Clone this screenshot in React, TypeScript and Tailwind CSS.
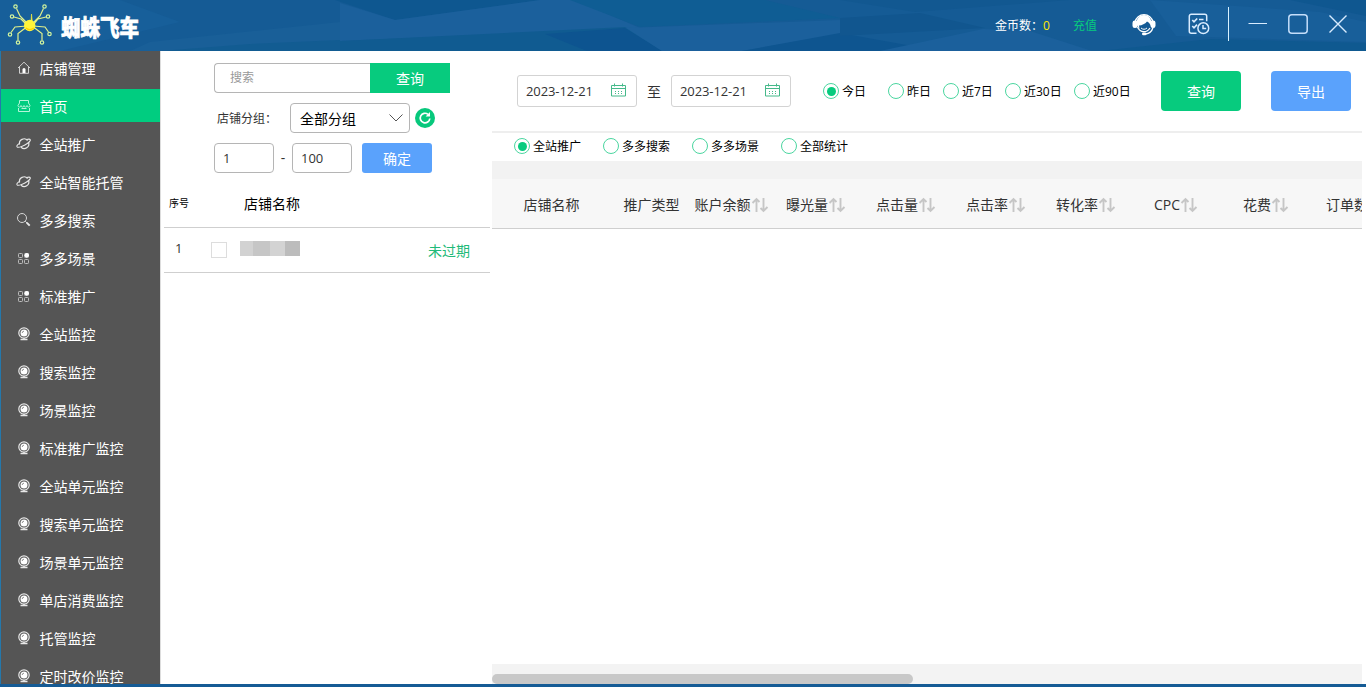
import { useState } from "react";
import clsx from "clsx";

const menu = [
  { label: "店铺管理", icon: "home" },
  { label: "首页", icon: "shop" },
  { label: "全站推广", icon: "planet" },
  { label: "全站智能托管", icon: "planet" },
  { label: "多多搜索", icon: "search" },
  { label: "多多场景", icon: "grid" },
  { label: "标准推广", icon: "grid" },
  { label: "全站监控", icon: "camera" },
  { label: "搜索监控", icon: "camera" },
  { label: "场景监控", icon: "camera" },
  { label: "标准推广监控", icon: "camera" },
  { label: "全站单元监控", icon: "camera" },
  { label: "搜索单元监控", icon: "camera" },
  { label: "场景单元监控", icon: "camera" },
  { label: "单店消费监控", icon: "camera" },
  { label: "托管监控", icon: "camera" },
  { label: "定时改价监控", icon: "camera" },
];

const days = [
  { label: "今日", width: "w-[65px]" },
  { label: "昨日", width: "w-[55px]" },
  { label: "近7日", width: "w-[62px]" },
  { label: "近30日", width: "w-[69px]" },
  { label: "近90日", width: "w-[79px]" },
];

const types = ["全站推广", "多多搜索", "多多场景", "全部统计"];

const columns = [
  { label: "店铺名称", width: "w-[119px]" },
  { label: "推广类型", width: "w-[81px]" },
  { label: "账户余额", width: "w-[79px]", sort: true },
  { label: "曝光量", width: "w-[90px]", sort: true },
  { label: "点击量", width: "w-[90px]", sort: true },
  { label: "点击率", width: "w-[90px]", sort: true },
  { label: "转化率", width: "w-[90px]", sort: true },
  { label: "CPC", width: "w-[90px]", sort: true },
  { label: "花费", width: "w-[90px]", sort: true },
  { label: "订单数", width: "w-[90px]", sort: true },
];

function MenuIcon({ name }: { name: string }) {
  return (
    <svg viewBox="0 0 14 14" className="w-3.5 h-3.5 shrink-0 overflow-visible" fill="none" stroke="#e8e8e8" strokeWidth="1">
      {name === "home" && (
        <>
          <path d="M1 7 7 1.2 13 7M2.5 6v6.3h9V6" stroke="#cfcfcf" />
          <path d="M5.5 12V8.6a1.5 1.5 0 0 1 3 0V12z" fill="#fff" stroke="none" />
        </>
      )}
      {name === "shop" && (
        <path
          d="M2.5 4V1.500h9V4M2.500 4 1 6.500a1.500 1.500 0 0 0 3 0 1.500 1.500 0 0 0 3 0 1.500 1.500 0 0 0 3 0 1.500 1.500 0 0 0 3 0L11.500 4M1.500 9v3.500h11V9M4.500 9.500h5"
          stroke="#b5f5da"
        />
      )}
      {name === "planet" && (
        <>
          <path d="M2.600 7.500a4.600 4.600 0 0 1 8-4M11.600 5.500a4.600 4.600 0 0 1-7.500 4.800" strokeWidth="1.200" />
          <path d="M2.800 6.300C.8 7.500-.5 8.800 0 9.700c.7 1.100 4.300.2 7.900-1.700s6-4.300 5.400-5.300c-.4-.7-1.700-.7-3.500-.2" strokeWidth="1.100" />
        </>
      )}
      {name === "search" && (
        <>
          <circle cx="5" cy="5" r="4.500" stroke="#d6d6d6" />
          <path d="m8.300 8.300 1.600 1.600" />
          <path d="m9.700 9.700 3 3" strokeWidth="1.900" />
        </>
      )}
      {name === "grid" && (
        <>
          <g stroke="#bdbdbd">
            <rect x="1.500" y="2.500" width="4" height="4" rx=".8" />
            <rect x="1.500" y="8.500" width="4" height="4" rx=".8" />
            <rect x="7.500" y="8.500" width="4" height="4" rx=".8" />
            <rect x="7.500" y="2.500" width="4" height="4" rx=".8" />
          </g>
          <circle cx="9.800" cy="4.200" r="2.200" fill="#fff" stroke="none" />
        </>
      )}
      {name === "camera" && (
        <>
          <circle cx="7" cy="6" r="5.200" strokeWidth="1.200" />
          <circle cx="7" cy="6" r="3.500" fill="#fff" stroke="none" />
          <path d="M5.200 6A1.800 1.800 0 0 1 7 4.200" stroke="#777" strokeWidth=".8" />
          <path d="M3.500 12.500h7M7 11v1.500" strokeWidth="1.300" />
        </>
      )}
    </svg>
  );
}

function HeaderPattern() {
  return (
    <svg className="absolute inset-0 w-full h-full" viewBox="0 0 1366 51" preserveAspectRatio="none">
      <rect width="1366" height="51" fill="#155b95" />
      <path d="M0 0h120l60 22L60 51H0z" fill="#175f9a" />
      <path d="M150 42 340 22v29H130z" fill="#195f98" />
      <path d="M160 51 250 44l90-4v11z" fill="#125c92" />
      <path d="M335 0h205L395 20z" fill="#0e5790" />
      <path d="m340 3 55 17L540 0h35l65 28-300 13z" fill="#1b609c" />
      <path d="m340 41 285-14 37 24H340z" fill="#105b91" />
      <path d="m545 34 80-6 37 23h-75z" fill="#0d5490" />
      <path d="M570 0h195l75 18-200 9z" fill="#0f5d94" />
      <path d="m626 28 214-8v14l-98 17h-80z" fill="#1b609c" />
      <path d="m742 51 98-18 100 18z" fill="#0e5590" />
      <path d="M840 0h230L915 12z" fill="#125891" />
      <path d="m840 18 80-5 65 15-145 8z" fill="#11568f" />
      <path d="m880 51 103-22 47 2 62 20z" fill="#1b609c" />
      <path d="m1100 51 110-12 156 4v8z" fill="#0f5990" />
      <path d="m1150 0 170 12 46 10v20l-190-6z" fill="#185f9a" />
      <path d="M1290 0h76v16z" fill="#0f5790" />
    </svg>
  );
}

function Spider() {
  const feet = [[15.5, 4.5], [44.5, 4.5], [12, 14.5], [48, 14.5], [10, 32.5], [49.5, 32], [18, 40.5], [42, 40.5]];
  return (
    <svg viewBox="0 0 54 48" className="w-[54px] h-12 shrink-0" fill="none" stroke="#e0f08c" strokeWidth="1.200">
      <path d="M16.500 6.500 20 14l7 7M43.500 6.500 40 14l-7 7M14 15l7 2 5 5M46 15l-8 2-4 5M11 30.500l4-5.500 12-1M48.500 30 45 25l-12-1M18 38.500v-7l8-6M42 38.500v-7l-8-6" />
      {feet.map(([x, y]) => (
        <circle key={`${x}-${y}`} cx={x} cy={y} r="1.700" fill="#155b95" stroke="#d2f5a0" />
      ))}
      <path d="m31 20 .5-8 .8 8z" fill="#fff43a" stroke="#fff43a" strokeWidth=".6" />
      <circle cx="29.700" cy="23.500" r="5.700" fill="#fff43a" stroke="none" />
      <path d="M26 26c2 2 5 2 8 0" stroke="#ffd000" />
    </svg>
  );
}

function Radio({ label, checked, onChange }: { label: string; checked: boolean; onChange: () => void }) {
  return (
    <button onClick={onChange} className="flex items-center gap-[3px] text-xs leading-4 text-black whitespace-nowrap">
      <span className="w-4 h-4 rounded-full border border-[#4bd6a0] bg-white flex items-center justify-center shrink-0">
        {checked && <span className="w-[9px] h-[9px] rounded-full bg-[#07cb7e]" />}
      </span>
      <span className="mt-0.5">{label}</span>
    </button>
  );
}

function DateBox({ value }: { value: string }) {
  return (
    <div className="w-[120px] h-8 border border-[#d3d3d3] rounded-[3px] flex items-center justify-between pl-2 pr-2.5 text-[13px] text-[#333]">
      <span className="tracking-[-0.1px]">{value}</span>
      <svg viewBox="0 0 15 14" className="w-[15px] h-3.5 -mt-0.5" fill="none" stroke="#45b98a">
        <path d="M.5 2.500h14v10.500H.5zM.5 5.500h14M3.500.5v3M11.500.5v3" />
        <path d="M4 8.500h7M4 10.500h7" strokeDasharray="1 2" />
      </svg>
    </div>
  );
}

function SortArrows() {
  return (
    <svg viewBox="0 0 18 16" className="w-[18px] h-4 shrink-0" fill="none" stroke="#c6c6c6" strokeWidth="1.900">
      <path d="M5.500 15V2M1.500 6 5.500 2l3 3M12.500 1v13M9.500 11l3 3 4-4" />
    </svg>
  );
}

export default function App() {
  const [active, setActive] = useState("首页");
  const [day, setDay] = useState("今日");
  const [type, setType] = useState("全站推广");

  return (
    <div className="w-[1366px] h-[687px] overflow-hidden flex flex-col bg-white font-['Open_Sans','Noto_Sans_CJK_SC',sans-serif] text-sm text-[#333]">
      <header className="relative h-[51px] shrink-0 text-white">
        <HeaderPattern />
        <div className="relative h-full flex items-center">
          <Spider />
          <h1 className="ml-[7px] mt-1 text-[19.5px] leading-6 font-black scale-y-115 whitespace-nowrap [-webkit-text-stroke:0.6px_white]">蜘蛛飞车</h1>
          <div className="ml-auto flex items-center h-full text-xs">
            <span>金币数：</span>
            <span className="w-[30px] text-[#ffe800]">0</span>
            <a className="w-[59px] text-[#07cb7e]">充值</a>
            <svg viewBox="0 0 24 24" className="w-6 h-6 -mt-1" fill="none" stroke="#fff">
              <path d="M3 10a9.200 9.200 0 0 1 18 0" strokeWidth="1.300" />
              <path d="M4.500 11C4.500 6 8 3 12 3s7.500 3 7.500 8l-1 2.500c-.5-2-1.500-3-3.500-4-2 2.500-5 3.800-8 4l.5 3.500A9 9 0 0 1 4.500 11z" fill="#fff" stroke="none" />
              <rect x=".5" y="8.500" width="5" height="7.500" rx="2.300" fill="#fff" stroke="none" />
              <rect x="18.500" y="8.500" width="5" height="7.500" rx="2.300" fill="#fff" stroke="none" />
              <path d="M5.500 15c1.300 3.200 3.500 4.700 6.500 4.700 2.500 0 4.500-1.200 6-3.700M21 15.500c-1 3.500-3.500 6-7.500 6.500" strokeWidth="1.300" />
              <path d="M9 16c2 1.700 4 1.700 6 0" strokeWidth="1" />
              <rect x="10" y="20.500" width="4.500" height="2.800" rx="1.400" fill="#fff" stroke="none" />
            </svg>
            <svg viewBox="0 0 22 22" className="ml-8 w-[22px] h-[22px] -mt-1" fill="none" stroke="#d9ecff" strokeWidth="1.500">
              <path d="M8.500 20.200H3.300a2 2 0 0 1-2-2v-15a2 2 0 0 1 2-2h13.400a2 2 0 0 1 2 2v5" />
              <path d="m4.300 7 1.700 1.800 3.200-3.300M11 6.500h4.500M4.300 13 6 14.800l3-3.100" strokeWidth="1.700" />
              <circle cx="15.300" cy="15.200" r="5.400" />
              <path d="M15 12v3.500h3.200" />
            </svg>
            <span className="ml-[18px] -mt-1 w-px h-[34px] bg-[#d7f1ff]" />
            <svg viewBox="0 0 20 20" className="ml-[19px] -mt-1 w-5 h-5" stroke="#d9ecff">
              <path d="M.5 9.500h18.500" />
            </svg>
            <svg viewBox="0 0 20 20" className="ml-5 -mt-1 w-5 h-5" fill="none" stroke="#c5defa" strokeWidth="1.500">
              <rect x=".8" y=".8" width="18.400" height="18.400" rx="3" />
            </svg>
            <svg viewBox="0 0 20 20" className="ml-5 mr-[18px] -mt-1 w-5 h-5" stroke="#d9ecff" strokeWidth="1.400">
              <path d="m1.500 1.500 17 17M18.500 1.500l-17 17" />
            </svg>
          </div>
        </div>
      </header>

      <div className="flex h-[633px] shrink-0 overflow-hidden">
        <nav className="w-[161px] shrink-0 bg-[#555] border-l border-[#2478ac] border-r border-r-[#ddd] text-white">
          {menu.map((item, i) => (
            <div key={item.label} className={clsx(i === 0 ? "h-[37px]" : "h-[38px] pt-px")}>
              <button
                onClick={() => setActive(item.label)}
                className={clsx("w-full h-[33px] pl-[15.5px] flex items-center gap-[9px] text-left", active === item.label && "bg-[#00cd80]")}
              >
                <MenuIcon name={item.icon} />
                <span className="mt-0.5 leading-5">{item.label}</span>
              </button>
            </div>
          ))}
        </nav>

        <section className="w-[331px] shrink-0 pt-3 pl-[3px] pr-0.5">
          <div className="flex flex-col gap-2.5 pl-[50px]">
            <div className="flex h-[30px]">
              <input placeholder="搜索" className="w-[156px] border border-r-0 border-[#b5b5b5] rounded-l px-[15px] text-xs placeholder:text-[#999] outline-none" />
              <button className="w-20 pt-0.5 bg-[#07cb7e] text-white">查询</button>
            </div>
            <div className="flex items-center h-[30px]">
              <span className="w-[76px] pl-[3px] pt-0.5 text-xs">店铺分组：</span>
              <div className="w-[120px] h-full border border-[#b5b5b5] rounded flex items-center justify-between pl-[9px] pr-1.5 text-black">
                <span className="mt-0.5">全部分组</span>
                <svg viewBox="0 0 14 8" className="w-3.5 h-2" fill="none" stroke="#555">
                  <path d="m.5.500 6.500 6.500L13.500.5" />
                </svg>
              </div>
              <svg viewBox="0 0 20 20" className="ml-[5px] w-5 h-5" fill="none">
                <circle cx="10" cy="10" r="10" fill="#07c87c" />
                <path d="M14.800 10.500a4.800 4.800 0 1 1-1.800-4.200" stroke="#fff" strokeWidth="1.700" />
                <path d="M15 4v4.400h-4.400z" fill="#fff" />
              </svg>
            </div>
            <div className="flex items-center h-[30px]">
              <input defaultValue="1" className="w-[60px] h-full border border-[#b5b5b5] rounded px-2 text-[13px] outline-none" />
              <span className="w-[18px] text-center">-</span>
              <input defaultValue="100" className="w-[60px] h-full border border-[#b5b5b5] rounded px-2 text-[13px] outline-none" />
              <button className="ml-2.5 w-[70px] h-full pt-0.5 rounded-[3px] bg-[#5aa2fc] text-white">确定</button>
            </div>
          </div>

          <div className="mt-[7px] h-12 border-b border-[#cfcfcf] flex items-center text-black">
            <span className="w-20 pl-[5px] text-[10px]">序号</span>
            <span>店铺名称</span>
          </div>
          <div className="h-[45px] border-b border-[#cfcfcf] flex items-center pr-5">
            <span className="w-[47px] pl-[11px] text-[13px] -mt-1">1</span>
            <span className="w-4 h-4 border border-[#ddd]" />
            <span className="ml-[13px] -mt-1 flex h-[15px]">
              <i className="w-[13px] bg-[#d2d2d2]" />
              <i className="w-[17px] bg-[#c6c6c6]" />
              <i className="w-[15px] bg-[#d3d3d3]" />
              <i className="w-[15px] bg-[#bcbcbc]" />
            </span>
            <span className="ml-auto mt-0.5 text-[#1fba79]">未过期</span>
          </div>
        </section>

        <main className="w-[870px] shrink-0 flex flex-col">
          <div className="h-20 shrink-0 flex items-center pl-[25px]">
            <DateBox value="2023-12-21" />
            <span className="w-[34px] pt-0.5 text-center">至</span>
            <DateBox value="2023-12-21" />
            <div className="ml-8 flex">
              {days.map((d) => (
                <div key={d.label} className={d.width}>
                  <Radio label={d.label} checked={day === d.label} onChange={() => setDay(d.label)} />
                </div>
              ))}
            </div>
            <button className="ml-2 w-20 h-10 pt-0.5 shrink-0 rounded bg-[#07cb7e] text-white">查询</button>
            <button className="ml-[30px] w-20 h-10 pt-0.5 shrink-0 rounded bg-[#5aa2fc] text-white">导出</button>
          </div>
          <div className="h-[30px] shrink-0 border-t-2 border-[#eee] flex items-center pl-[22px] pb-0.5">
            {types.map((t) => (
              <div key={t} className="w-[89px]">
                <Radio label={t} checked={type === t} onChange={() => setType(t)} />
              </div>
            ))}
          </div>
          <div className="h-[18px] shrink-0 bg-[#f2f2f2]" />
          <div className="h-[50px] shrink-0 pt-0.5 bg-[#f7f7f7] border-b border-[#cfcfcf] flex items-center overflow-hidden">
            {columns.map((c) => (
              <div key={c.label} className={clsx("shrink-0 flex items-center justify-center whitespace-nowrap", c.width)}>
                {c.label}
                {c.sort && <SortArrows />}
              </div>
            ))}
          </div>
          <div className="flex-1" />
          <div className="h-5 shrink-0 bg-[#f3f3f3] flex items-end">
            <div className="w-[421px] h-2.5 rounded-full bg-[#c8c8c8]" />
          </div>
        </main>
      </div>

      <footer className="h-[3px] shrink-0 bg-[#155b95]" />
    </div>
  );
}
